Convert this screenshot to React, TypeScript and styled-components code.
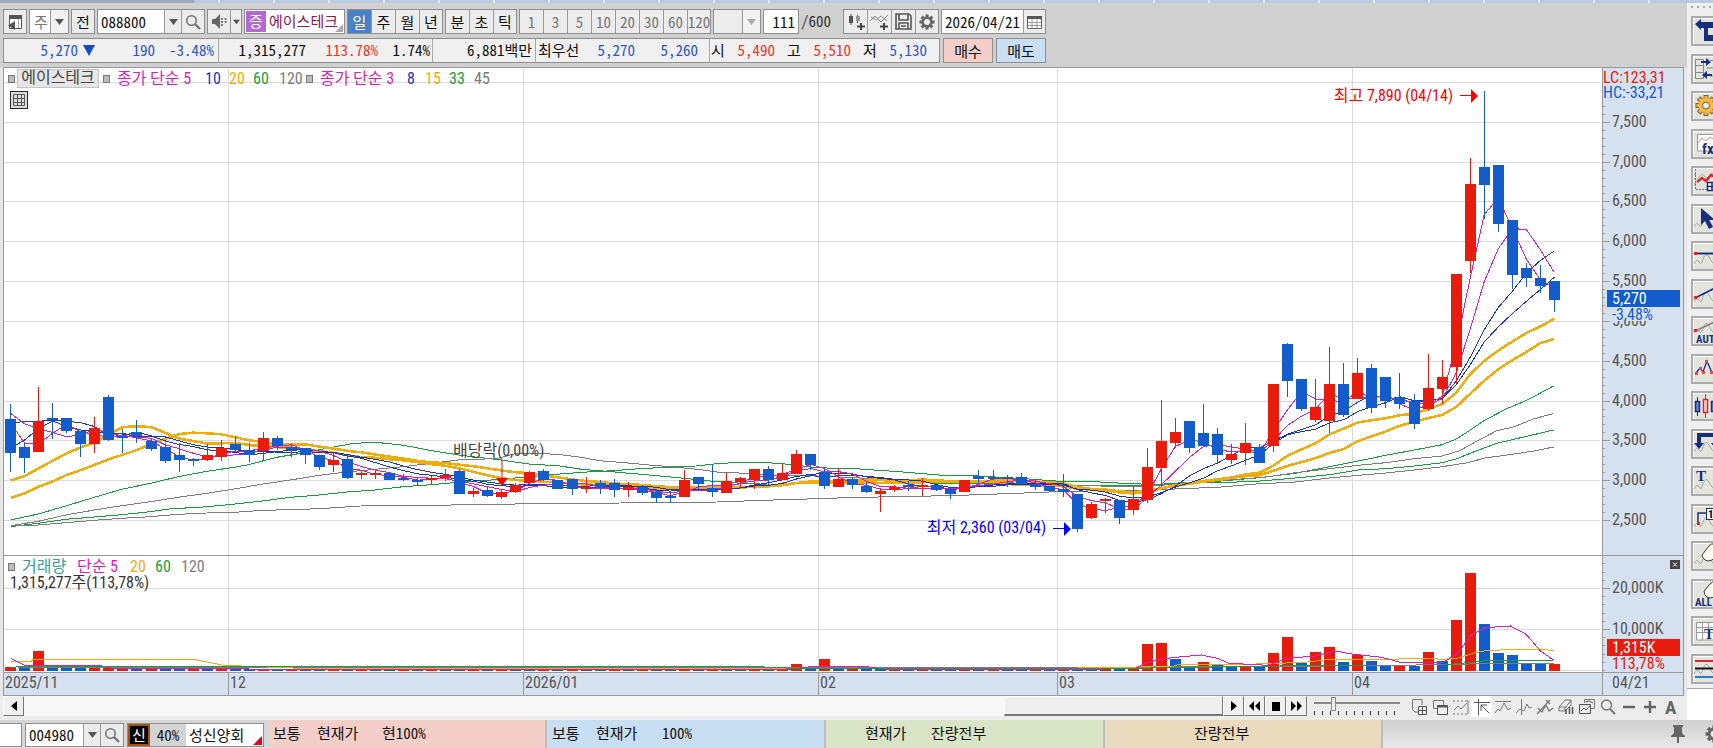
import React, { useLayoutEffect, useRef, useState } from 'react';
import styled, { createGlobalStyle, css } from 'styled-components';

const FONT = '"Noto Sans Mono CJK KR", "Noto Sans CJK KR", monospace';
const CHART_FONT = '"Roboto Condensed", "Noto Sans CJK KR", sans-serif';
const RED = '#e81b0c';
const BLUE = '#125ccb';
const MAGENTA = '#e01cb8';
const NAVY = '#1a35b5';
const ORANGE = '#f0ac08';
const GREEN = '#12a03c';
const GRAY = '#7c7c7c';

const Global = createGlobalStyle`
  * { box-sizing: border-box; }
  body { margin: 0; background: #e6e6e6; font: 15px/20px ${FONT}; color: #111; overflow-x: hidden; }
  button, input, select { font: inherit; color: inherit; margin: 0; padding: 0; border: 0; border-radius: 0; background: none; }
`;

/* ---------- page ---------- */
const Page = styled.div`display: flex; flex-direction: column; min-height: 100vh;`;
const TopStrip = styled.div`
  height: 3px;
  background: linear-gradient(90deg, #a0aaba 0 194px, transparent 194px), repeating-linear-gradient(90deg, #bdc9de 0 53px, #dfe6f0 53px 55px);
`;
const SideStrip = styled.div`height: 3px; background: #bdc9de;`;
const Main = styled.main`display: flex; flex: 1;`;
const Work = styled.div`flex: 1; min-width: 0; display: flex; flex-direction: column;`;
const Toolbar = styled.header`
  display: flex; flex-direction: column; gap: 4px; padding: 6px 3px 4px; background: #d0d0d0;
`;
const Bar = styled.div<{ $gap?: number }>`display: flex; gap: ${p => p.$gap ?? 2}px; height: 25px; white-space: nowrap;`;

/* ---------- toolbar parts ---------- */
const Group = styled.div<{ $w?: number; $bg?: string }>`
  display: flex; position: relative; flex: none;
  width: ${p => (p.$w ? `${p.$w}px` : 'auto')};
  border: 1px solid #8f8f8f; background: ${p => p.$bg ?? '#fff'};
`;
const ToolButton = styled.button<{ $w?: number; $active?: boolean; $dim?: boolean; $first?: boolean }>`
  display: flex; align-items: center; justify-content: center; flex: none;
  width: ${p => p.$w ?? 24}px;
  border-left: ${p => (p.$first ? 0 : 1)}px solid #9a9a9a;
  background: ${p => (p.$active ? '#4b80c4' : '#ececec')};
  color: ${p => (p.$active ? '#fff' : p.$dim ? '#777' : '#111')};
`;
const TextInput = styled.input<{ $w: number; $align?: string }>`
  width: ${p => p.$w}px; padding: 0 3px; text-align: ${p => p.$align ?? 'left'}; outline: 0;
`;
const Select = styled.select<{ $dim?: boolean; $bg?: string }>`
  appearance: none; width: 100%; padding-left: 4px; color: ${p => (p.$dim ? '#777' : '#111')};
  background: ${p => p.$bg ?? '#fff'};
`;
const SelectArrow = styled.span<{ $w: number }>`
  position: absolute; right: 0; top: 0; bottom: 0; width: ${p => p.$w}px; display: flex; align-items: center;
  justify-content: center; border-left: 1px solid #9a9a9a; background: #f2f2f2; pointer-events: none;
`;
const Market = styled.span`
  margin: 1px 3px 1px 1px; width: 20px; text-align: center; background: #b468d4; color: #fff;
`;
const StockName = styled.span`color: #8e1850; line-height: 22px;`;
const Corner = styled.i<{ $c: string; $s: number }>`
  position: absolute; right: 1px; bottom: 1px; border-style: solid;
  border-width: 0 0 ${p => p.$s}px ${p => p.$s}px; border-color: transparent transparent ${p => p.$c};
`;
const Total = styled.span`width: 40px; line-height: 24px; color: #333;`;

/* ---------- quote row ---------- */
const Quote = styled.div`
  display: flex; width: 937px; border: 1px solid #8f8f8f; background: #f0f0f0; line-height: 22px;
`;
const QuoteCell = styled.div<{ $w: number; $pad?: number; $end?: boolean }>`
  display: flex; flex: none; width: ${p => p.$w}px; padding-left: ${p => p.$pad ?? 0}px;
  ${p => p.$end && css`justify-content: flex-end; padding-right: 3px;`}
  & + & { border-left: 1px solid #a8a8a8; }
`;
const Num = styled.span<{ $w: number; $c?: string }>`
  width: ${p => p.$w}px; text-align: right; color: ${p => p.$c ?? '#111'};
`;
const Label = styled.span<{ $w: number; $ml?: number }>`width: ${p => p.$w}px; margin-left: ${p => p.$ml ?? 0}px;`;
const Down = styled.i`
  margin: 6px 0 0 5px; height: 0; border: solid transparent; border-width: 11px 6px 0; border-top-color: #124cc8;
`;
const OrderButton = styled.button<{ $bg: string }>`
  width: 50px; border: 1px solid #8f8f8f; background: ${p => p.$bg};
`;

/* ---------- chart ---------- */
const Frame = styled.section`
  position: relative; display: flex; margin: 0 3px; border: 1px solid #999; background: #fff;
  font: 16px/19px ${CHART_FONT};
`;
const Plot = styled.div`flex: 1; min-width: 0; overflow: hidden; svg { display: block; }`;
const Axis = styled.svg`display: block; flex: none; width: 81px; background: #d6e1ef;`;
const Legend = styled.div<{ $top: number }>`
  position: absolute; left: 4px; top: ${p => p.$top}px; display: flex; align-items: center; height: 19px;
`;
const Square = styled.i<{ $ml?: number }>`
  width: 7px; height: 8px; margin-left: ${p => p.$ml ?? 0}px; border: 1px solid #777; background: #bbb;
`;
const LegendName = styled.span`
  margin: 0 4px 0 2px; width: 82px; height: 19px; line-height: 16px; border: 1px solid #c4c4c4; background: #e6e6e6;
  color: #444; text-align: center;
`;
const Key = styled.span<{ $w: number; $c: string; $ml?: number }>`
  width: ${p => p.$w}px; margin-left: ${p => p.$ml ?? 0}px; color: ${p => p.$c}; white-space: nowrap;
`;
const GridButton = styled.button`
  position: absolute; left: 6px; top: 23px; width: 18px; height: 18px; border: 1px solid #222; background: #ddd;
  display: grid; place-items: center;
`;
const VolumeText = styled.span`position: absolute; left: 6px; top: 505px; color: #333;`;

/* ---------- scroll row ---------- */
const ScrollRow = styled.div`
  display: flex; align-items: flex-start; height: 24px; padding: 0 6px 0 3px; background: #ececec;
`;
const ScrollButton = styled.button`
  display: grid; place-items: center; flex: none; width: 21px; height: 20px;
  border: 1px solid; border-color: #fff #777 #777 #fff; background: #efefef;
`;
const Track = styled.div`flex: 1; display: flex; justify-content: flex-end; height: 20px; background: #f8f8f8;`;
const Thumb = styled.div`
  width: 18.3%; border: solid; border-width: 1px 1px 2px; border-color: #fff #777 #777 #fff; background: #efefef;
`;
const SliderBox = styled.label`display: grid; width: 86px; margin: 0 8px 0 7px;`;
const Range = styled.input`
  appearance: none; width: 86px; height: 15px; margin: 0; background: linear-gradient(#888, #888) 0 6px / 100% 2px no-repeat;
  &::-webkit-slider-thumb { appearance: none; width: 5px; height: 14px; background: #eee; border: 1px solid #888; }
`;
const Ticks = styled.i`height: 4px; background: repeating-linear-gradient(90deg, #333 0 1px, transparent 1px 8px);`;
const IconButton = styled.button<{ $on?: boolean }>`
  display: grid; place-items: center; flex: none; width: 21px; height: 21px; background: ${p => (p.$on ? '#fff' : 'none')};
`;

/* ---------- side tools ---------- */
const Side = styled.aside`
  display: flex; flex-direction: column; width: 26px; overflow: hidden; background: #efefef;
`;
const Grip = styled.i`height: 2px; margin: 3px 0 8px 4px; background: repeating-linear-gradient(90deg, #aaa 0 2px, transparent 2px 6px);`;
const SideList = styled.div`
  display: flex; flex-direction: column; justify-content: space-between; flex: 1; max-height: 668px; padding-left: 4px;
`;
const SideButton = styled.button`
  width: 34px; height: 30px; border: 2px solid #ababab; background: #e4e4df; box-shadow: inset 1px 1px #fff;
  svg { display: block; }
`;
const SideFoot = styled.div`height: 32px; margin-top: 4px; border-top: 1px solid #aaa; background: #fff;`;

/* ---------- status bar ---------- */
const Status = styled.footer`
  display: flex; height: 28px; background: linear-gradient(#d0d0d0, #e8e8e8); white-space: nowrap; overflow: hidden;
`;
const StatusTools = styled.div`
  display: flex; gap: 3px; width: 269px; flex: none; padding-top: 3px; height: 27px; background: #d6d6d6;
`;
const Stub = styled.span`width: 22px; border: 1px solid #8f8f8f; border-left: 0; background: #fff;`;
const Credit = styled.span`width: 22px; border: 2px solid #a0541a; background: #000; color: #fff; text-align: center; line-height: 17px;`;
const Rate = styled.span`width: 36px; background: #d4d4d4; text-align: center; line-height: 21px;`;
const Company = styled.span`padding-left: 3px; line-height: 21px;`;
const Panel = styled.div<{ $bg: string; $pad: number; $w: number }>`
  display: flex; flex: 0 1 ${p => p.$w}px; padding-left: ${p => p.$pad}px; line-height: 26px;
  border-right: 2px solid #bdbdbd; background: ${p => p.$bg};
`;
const StatusEnd = styled.div`display: flex; align-items: center; gap: 20px; margin-left: auto; margin-right: -10px;`;

const Tri = ({ c = '#555', s = 9 }: { c?: string; s?: number }) => (
  <svg width={s} height={6} viewBox="0 0 9 6" aria-hidden><path d="M0 0h9L4.500 6z" fill={c} /></svg>
);
const Lens = () => (
  <svg width="16" height="16" viewBox="0 0 16 16" fill="none" stroke="#777"><circle cx="6.500" cy="6.500" r="4.700" strokeWidth="1.600" /><path d="M10 10l5 5" strokeWidth="2.400" /></svg>
);
const Gear = ({ s = 17, c = '#666' }: { s?: number; c?: string }) => (
  <svg width={s} height={s} viewBox="0 0 18 18" aria-hidden>
    <g fill={c}>{[0, 45, 90, 135].map(a => <rect key={a} x="7.300" y="0.500" width="3.400" height="17" transform={`rotate(${a} 9 9)`} />)}<circle cx="9" cy="9" r="6.300" /></g>
    <circle cx="9" cy="9" r="3.400" fill="#eee" />
  </svg>
);

/* Price bars: direction, body top, body bottom, wick top, wick bottom (chart y). */
type Candle = [0 | 1, number, number, number, number];
const thirds = (base: number, rows: Candle[]): Candle[] =>
  rows.map(r => [r[0], base + r[1] / 3, base + r[2] / 3, base + r[3] / 3, base + r[4] / 3]);
const CANDLES: Candle[] = [
  ...thirds(360, [
    [0, 178, 278, 132, 335], [0, 262, 293, 250, 340], [1, 184, 276, 80, 276], [0, 175, 181, 128, 238], [0, 175, 214, 175, 218],
    [0, 212, 252, 212, 291], [1, 205, 252, 170, 279], [0, 111, 240, 106, 244], [0, 227, 233, 207, 279], [0, 217, 229, 181, 248],
    [0, 243, 266, 238, 272], [0, 262, 303, 250, 308], [0, 284, 300, 250, 335], [0, 297, 300, 294, 317], [1, 285, 300, 252, 302],
    [1, 264, 290, 240, 302], [0, 252, 271, 227, 275], [0, 269, 284, 250, 305], [1, 234, 272, 215, 303], [0, 235, 258, 227, 270],
    [0, 262, 270, 255, 292], [0, 264, 284, 264, 312], [0, 284, 322, 284, 330], [1, 299, 315, 279, 335], [0, 298, 353, 288, 357],
    [1, 340, 345, 334, 357], [1, 339, 343, 332, 357], [0, 340, 360, 340, 360], [0, 353, 357, 343, 362], [0, 360, 364, 354, 378],
    [1, 354, 359, 348, 375], [1, 345, 353, 327, 362], [0, 332, 402, 326, 402], [1, 393, 402, 384, 410], [0, 389, 408, 381, 410],
    [1, 396, 410, 386, 417], [1, 376, 395, 370, 400], [1, 336, 368, 332, 376], [0, 333, 360, 328, 364], [0, 360, 387, 360, 387],
  ]),
  ...thirds(400, [
    [0, 238, 267, 238, 284], [1, 262, 267, 230, 278], [0, 248, 263, 240, 282], [0, 249, 271, 237, 290], [1, 261, 271, 245, 290],
    [0, 261, 278, 255, 284], [0, 275, 293, 268, 308], [0, 288, 292, 278, 308], [1, 241, 290, 210, 290], [0, 231, 251, 231, 268],
    [0, 265, 277, 194, 290], [1, 242, 278, 218, 278], [1, 235, 245, 230, 264], [1, 208, 241, 208, 268], [0, 208, 241, 199, 256],
    [1, 220, 240, 192, 240], [1, 163, 223, 151, 223], [0, 163, 196, 163, 210], [0, 215, 258, 203, 266], [1, 238, 260, 204, 260],
    [0, 238, 255, 232, 268], [0, 258, 276, 245, 279], [1, 272, 282, 265, 335], [1, 262, 269, 254, 275], [0, 255, 260, 243, 274],
    [1, 255, 260, 235, 288], [0, 255, 270, 255, 274], [0, 266, 283, 260, 297], [1, 239, 275, 239, 275], [0, 228, 236, 211, 248],
    [0, 231, 235, 211, 241], [0, 231, 235, 226, 260], [0, 231, 251, 219, 251], [0, 251, 260, 237, 271], [0, 257, 272, 257, 276],
    [0, 268, 276, 222, 290], [0, 283, 387, 283, 395], [1, 312, 353, 306, 358], [1, 298, 304, 293, 338],
  ]),
  ...thirds(320, [
    [0, 541, 593, 541, 612], [1, 538, 571, 500, 586], [1, 440, 540, 384, 549], [1, 362, 443, 241, 502], [1, 336, 368, 293, 385],
    [0, 302, 383, 302, 398], [0, 339, 377, 252, 377], [0, 343, 406, 324, 430], [1, 403, 419, 373, 432], [1, 369, 398, 309, 436],
    [0, 381, 429, 373, 429], [1, 193, 378, 193, 395], [0, 73, 184, 68, 230], [0, 178, 267, 178, 272], [1, 261, 301, 177, 305],
    [1, 193, 304, 80, 340], [0, 193, 286, 129, 290], [1, 159, 237, 114, 237], [0, 144, 263, 132, 279], [0, 170, 244, 170, 264],
    [0, 230, 251, 159, 266], [0, 242, 312, 222, 327], [1, 205, 267, 102, 272], [1, 170, 208, 121, 252],
  ]),
  ...thirds(60, [
    [1, 643, 920, 643, 972], [1, 373, 604, 294, 640], [0, 321, 376, 92, 478], [0, 316, 492, 316, 515], [0, 481, 646, 481, 687],
    [0, 624, 654, 609, 680], [0, 654, 677, 616, 698], [0, 664, 720, 664, 755],
  ]),
];
const barX = (i: number) => 10.7 + i * 14.033;
const CLOSES = CANDLES.map(c => (c[0] ? c[1] : c[2]));

type Pt = [number, number];
const average = (n: number, lead: number[]): Pt[] =>
  CLOSES.map((_, i) => {
    if (i < n - 1) return [barX(i), 360 + lead[i] / 3];
    return [barX(i), CLOSES.slice(i - n + 1, i + 1).reduce((a, b) => a + b, 0) / n];
  });
const trace = (ox: number, sx: number, oy: number, pts: number[]): Pt[] => {
  const out: Pt[] = [];
  for (let i = 0; i < pts.length; i += 2) out.push([ox + pts[i] / sx, oy + pts[i + 1] / 3]);
  return out;
};
const W1 = [0, 2.8, 360] as const, W2 = [560, 2.8, 400] as const, W3 = [1100, 2.558, 320] as const;
const SLOW: [string, Pt[]][] = [
  [GREEN, [
    ...trace(...W1, [30, 480, 107, 462, 184, 438, 264, 412, 341, 388, 421, 370, 499, 350, 579, 334, 656, 322, 695, 314, 775, 292, 852, 278, 920, 264, 980, 252, 1045, 246, 1130, 256, 1210, 272, 1290, 286, 1404, 300, 1482, 312]),
    ...trace(...W2, [0, 198, 60, 208, 130, 214, 260, 226, 340, 234, 410, 242, 480, 248, 560, 252, 640, 252, 720, 248, 960, 248, 1300, 252]),
    ...trace(...W3, [0, 497, 100, 496, 200, 490, 300, 488, 400, 484, 500, 474, 587, 464, 660, 450, 731, 446, 804, 438, 875, 428, 913, 416, 960, 394, 1015, 370, 1070, 355, 1160, 330]),
  ]],
  [GREEN, [
    ...trace(...W1, [30, 500, 107, 490, 184, 478, 264, 471, 341, 464, 421, 455, 480, 446, 560, 442, 640, 434, 740, 422, 813, 412, 894, 405, 971, 396, 1050, 390, 1129, 380, 1209, 374, 1290, 366, 1404, 358, 1482, 350]),
    ...trace(...W2, [0, 222, 60, 217, 150, 212, 220, 206, 300, 202, 380, 198, 430, 192, 500, 187, 570, 187, 640, 193, 720, 203, 840, 207, 960, 216, 1060, 225, 1170, 228, 1300, 236, 1400, 244]),
    ...trace(...W3, [0, 486, 60, 490, 150, 494, 210, 488, 300, 484, 400, 474, 500, 460, 587, 440, 660, 423, 731, 406, 804, 390, 875, 374, 913, 356, 950, 328, 985, 300, 1040, 266, 1090, 242, 1160, 198]),
  ]],
  [GRAY, [
    ...trace(...W1, [30, 497, 107, 484, 184, 465, 264, 450, 341, 437, 421, 425, 499, 412, 579, 400, 656, 387, 736, 372, 813, 360, 894, 346, 971, 336, 1050, 328, 1129, 320, 1209, 310, 1290, 299, 1390, 296, 1440, 282, 1510, 280]),
    ...trace(...W2, [0, 164, 60, 172, 110, 182, 180, 188, 250, 195, 330, 202, 400, 210, 440, 216, 520, 220, 600, 226, 720, 228, 840, 234, 960, 242, 1100, 244, 1300, 250, 1400, 256]),
    ...trace(...W3, [0, 498, 100, 500, 200, 492, 300, 482, 420, 472, 500, 458, 587, 446, 660, 436, 731, 428, 804, 416, 875, 408, 920, 392, 960, 366, 1015, 332, 1060, 320, 1110, 296, 1160, 281]),
  ]],
  [GRAY, [
    ...trace(...W1, [30, 498, 107, 495, 184, 488, 264, 481, 341, 475, 421, 470, 499, 463, 579, 459, 656, 457, 736, 451, 813, 449, 894, 446, 1010, 438, 1209, 437, 1320, 433]),
    ...trace(...W2, [0, 311, 170, 309, 440, 306, 570, 301, 720, 296, 800, 293, 930, 290, 1090, 287, 1250, 281, 1370, 276]),
    ...trace(...W3, [0, 512, 100, 513, 170, 508, 300, 502, 400, 492, 500, 486, 587, 474, 660, 466, 731, 459, 804, 450, 875, 440, 940, 428, 985, 414, 1060, 402, 1110, 393, 1160, 381]),
  ]],
];
const WIDE: Pt[][] = [
  average(15, [362, 348, 325, 302, 280, 262, 248, 222, 201, 199, 201, 218, 236, 243]),
  average(20, [414, 400, 380, 364, 345, 330, 314, 298, 284, 270, 252, 236, 222, 218, 220, 223, 232, 241, 246]),
];
const FAST: [string, Pt[]][] = [
  [NAVY, average(8, [190, 184, 184, 180, 184, 188, 200])],
  [NAVY, average(10, [265, 240, 204, 183, 200, 210, 215, 219, 220])],
  [MAGENTA, average(5, [160, 192, 205, 218])],
  [MAGENTA, average(3, [190, 250])],
];

/* Volume bars: index -> direction and top. */
const BIG: Record<number, [0 | 1, number]> = {
  0: [1, 380], 1: [0, 383], 2: [1, 334], 3: [0, 383], 4: [0, 383], 5: [0, 383], 6: [1, 383], 7: [1, 383], 56: [1, 372], 58: [1, 358],
  81: [1, 312], 82: [1, 309], 83: [0, 358], 84: [0, 377], 85: [1, 366], 86: [0, 376], 87: [0, 381], 88: [1, 380], 89: [0, 380],
  90: [1, 340], 91: [1, 290], 92: [0, 366], 93: [1, 335], 94: [1, 320], 95: [0, 365], 96: [1, 346], 97: [0, 362], 98: [0, 377],
  99: [1, 377], 100: [0, 377], 101: [1, 336], 102: [0, 362], 103: [1, 241], 104: [1, 99], 105: [0, 253], 106: [0, 338],
  107: [0, 346], 108: [0, 371], 109: [0, 371], 110: [1, 372],
};
const V1 = [0, 2.8, 540] as const, V3 = [1100, 2.558, 540] as const;
const VOLUME_LINES: [string, Pt[]][] = [
  [GRAY, [...trace(...V1, [50, 383, 1568, 382]), ...trace(...V3, [130, 381, 460, 379, 690, 377, 930, 373, 980, 370, 1160, 370])]],
  [ORANGE, [...trace(...V1, [30, 363, 88, 363, 92, 359, 548, 359, 625, 376, 870, 386, 1568, 386, 2200, 386, 2900, 385]), ...trace(...V3, [60, 383, 140, 378, 190, 378, 200, 374, 340, 374, 460, 370, 530, 366, 580, 359, 850, 356, 880, 358, 915, 354, 960, 338, 985, 332, 1040, 329, 1130, 328, 1160, 332])]],
  [MAGENTA, [...trace(...V1, [30, 355, 68, 375, 272, 375, 320, 386, 1568, 389, 2200, 389, 2280, 379, 2420, 379, 2480, 388, 3050, 388]), ...trace(...V3, [90, 385, 120, 368, 158, 357, 193, 352, 260, 345, 300, 355, 330, 370, 430, 376, 480, 355, 550, 348, 600, 333, 650, 343, 720, 352, 768, 367, 880, 366, 915, 340, 950, 285, 985, 263, 1050, 258, 1090, 283, 1127, 333, 1160, 360])]],
  [GREEN, [...trace(...V1, [30, 383, 50, 380, 2120, 380, 2200, 384]), ...trace(...V3, [0, 384, 130, 384, 340, 380, 460, 378, 690, 375, 880, 375, 940, 368, 980, 363, 1160, 362])]],
];

const MONTHS: [number, string][] = [[228, '12'], [523, '2026/01'], [818, '02'], [1057, '03'], [1352, '04']];
const priceY = (p: number) => Math.round(520 - (p - 2500) * 0.07964);
const PRICES = [2500, 3000, 3500, 4000, 4500, 5000, 5500, 6000, 6500, 7000, 7500];
const TOP = 68, HEIGHT = 627, PLOT_W = 1598;

function useWidth(initial: number) {
  const ref = useRef<HTMLDivElement>(null);
  const [width, setWidth] = useState(initial);
  useLayoutEffect(() => {
    const el = ref.current;
    if (!el) return;
    const update = () => setWidth(el.clientWidth);
    update();
    const ro = new ResizeObserver(update);
    ro.observe(el);
    return () => ro.disconnect();
  }, []);
  return [ref, width] as const;
}

function PlotArea() {
  const [ref, w] = useWidth(PLOT_W);
  const fx = (x: number) => ((x - 4) * w) / PLOT_W;
  const line = (pts: Pt[]) => pts.map(([x, y]) => `${fx(x).toFixed(1)},${y.toFixed(1)}`).join(' ');
  const bw = Math.max(3, Math.round((11 * w) / PLOT_W));
  return (
    <Plot ref={ref}>
      <svg width={w} height={HEIGHT} viewBox={`0 ${TOP} ${w} ${HEIGHT}`} fontFamily={CHART_FONT} fontSize="16">
        <g fill="#dadada" shapeRendering="crispEdges">
          {[...PRICES, 8000].map(p => <rect key={p} x="0" y={priceY(p)} width={w - 2} height="1" />)}
          <rect x="0" y="588" width={w - 2} height="1" /><rect x="0" y="629" width={w - 2} height="1" /><rect x="0" y="670" width={w - 2} height="1" />
          {MONTHS.map(([x]) => <rect key={x} x={Math.round(fx(x))} y={TOP} width="1" height="605" />)}
        </g>
        <g fill="none" shapeRendering="crispEdges">
          {SLOW.map(([c, p], i) => <polyline key={i} points={line(p)} stroke={c} />)}
          {WIDE.map((p, i) => <polyline key={i} points={line(p)} stroke={ORANGE} strokeWidth="2.500" />)}
          {FAST.map(([c, p], i) => <polyline key={i} points={line(p)} stroke={c} />)}
        </g>
        <g shapeRendering="crispEdges">
          {CANDLES.map(([up, t, b, wt, wb], i) => {
            const x = Math.floor(fx(barX(i)));
            return (
              <g key={i} fill={up ? RED : BLUE}>
                <rect x={x} y={wt} width="1" height={wb - wt} />
                <rect x={x - Math.floor(bw / 2)} y={Math.round(t)} width={bw} height={Math.max(2, Math.round(b) - Math.round(t))} />
              </g>
            );
          })}
          {CANDLES.map((_, i) => {
            const [up, t] = BIG[i] ?? [((i * 7) % 5 < 2 ? 1 : 0) as 0 | 1, 386];
            const y = Math.round(540 + t / 3);
            return <rect key={i} x={Math.floor(fx(barX(i))) - Math.floor(bw / 2)} y={y} width={bw} height={671 - y} fill={up ? RED : BLUE} />;
          })}
          {VOLUME_LINES.map(([c, p], i) => <polyline key={i} points={line(p)} stroke={c} fill="none" />)}
        </g>
        <path d={`M${fx(502)} 459v20`} stroke={RED} />
        <path d={`M${fx(502) - 6} 478h12l-6 8z`} fill="#f00" />
        <text x={fx(453)} y="456" fill="#444">배당락(0,00%)</text>
        <g fill="#f00"><text x={fx(1457) - 4} y="101" textAnchor="end">최고 7,890 (04/14)</text><path d={`M${fx(1460)} 95h11v-6l7 7-7 7v-7h-11z`} /></g>
        <g fill="#00f"><text x={fx(1050) - 4} y="533" textAnchor="end">최저 2,360 (03/04)</text><path d={`M${fx(1053)} 528h11v-6l7 7-7 7v-7h-11z`} /></g>
        <rect x="0" y="555" width={w} height="1" fill="#999" />
        <rect x="0" y="672" width={w} height="24" fill="#d6e1ef" />
        <rect x="0" y="672" width={w} height="1" fill="#999" />
        <g fill="#555">
          <text x="1" y="688">2025/11</text>
          {MONTHS.map(([x, t]) => <g key={x}><rect x={Math.round(fx(x))} y="673" width="1" height="23" fill="#999" /><text x={fx(x) + 2} y="688">{t}</text></g>)}
        </g>
      </svg>
    </Plot>
  );
}

function PriceAxis() {
  const minor: number[] = [];
  for (let p = 2500; p <= 7700; p += 100) minor.push(520 - (p - 2500) * 0.07964);
  for (let y = 670; y > 556; y -= 8.2) minor.push(y);
  return (
    <Axis height={HEIGHT} viewBox={`0 ${TOP} 81 ${HEIGHT}`} fontFamily={CHART_FONT} fontSize="16">
      <rect x="0" y={TOP} width="1" height={HEIGHT} fill="#999" />
      <g fill="#999" shapeRendering="crispEdges">
        {minor.map((y, i) => <rect key={i} x="1" y={Math.round(y)} width="2" height="1" />)}
        {PRICES.map(p => <rect key={p} x="1" y={priceY(p)} width="7" height="1" />)}
        <rect x="1" y="588" width="7" height="1" /><rect x="1" y="629" width="7" height="1" />
        <rect x="0" y="555" width="81" height="1" /><rect x="0" y="672" width="81" height="1" />
      </g>
      <g fill="#555">
        {PRICES.map(p => <text key={p} x="10" y={priceY(p) + 5}>{p.toLocaleString('en-US')}</text>)}
        <text x="10" y="593">20,000K</text><text x="10" y="634">10,000K</text><text x="10" y="688">04/21</text>
      </g>
      <text x="1" y="83" fill={RED}>LC:123,31</text>
      <text x="1" y="98" fill={BLUE}>HC:-33,21</text>
      <rect x="9" y="307" width="60" height="14" fill="#d6e1ef" />
      <rect x="5" y="290" width="73" height="17" fill={BLUE} /><text x="10" y="304" fill="#fff">5,270</text>
      <text x="10" y="320" fill={BLUE}>-3,48%</text>
      <rect x="5" y="639" width="73" height="17" fill={RED} /><text x="10" y="653" fill="#fff">1,315K</text>
      <text x="10" y="669" fill={RED}>113,78%</text>
      <rect x="68" y="560" width="10" height="9" fill="#444" /><path d="M71 562.500l4 4m0-4l-4 4" stroke="#fff" />
    </Axis>
  );
}

/* ---------- side tool drawings (26 x 26) ---------- */
const Wave = ({ y = 0 }: { y?: number }) => <path d={`M1 ${21 + y}q3-6 5-2t4-3q3-8 6-2t5 7`} fill="none" stroke="#a5a5a5" />;
const INK = '#1a2f7c';
const SIDE: React.ReactNode[] = [
  <path d="M2 6l6-5v3h13v6h-6v7h7v6h-11V10H8v2z" fill={INK} />,
  <><g fill="none" stroke="#888"><path d="M2.500 3.500h8v19h-8zM2.500 9.500h8M2.500 16.500h8M14 12h8M17 4.500h4M17 20h4" /></g><path d="M8 5h5V2l5 4-5 4V7H8zM19 18h-5v-3l-5 4 5 4v-3h5z" fill={INK} /></>,
  <g transform="translate(3 2)"><g fill="#f4b63c" stroke="#7a6232">{[0, 45, 90, 135].map(a => <rect key={a} x="8" y="0.500" width="4" height="20" transform={`rotate(${a} 10 10.500)`} />)}</g><circle cx="10" cy="10.500" r="7.500" fill="#f7b93e" /><circle cx="10" cy="10.500" r="3.500" fill="#eee" stroke="#7a6232" /></g>,
  <><path d="M4.500 17V3.500H26V20H4.500z" fill="#fff" stroke="#999" /><path d="M5 12l4-5 4 3 4-4 6 4" fill="none" stroke="#e88" /><text x="9" y="23" fontSize="15" fontFamily={CHART_FONT} fontWeight="700" fill={INK}>fx</text></>,
  <><path d="M2.500 1v20.500H15M1 6h2M1 11h2M1 16h2" stroke="#777" fill="none" strokeDasharray="2 1" /><path d="M4 11l5-5 5 4 5-5 4 2" stroke="#aaa" fill="none" /><path d="M4 14l5-4 4 3 5-6 6 3" fill="none" stroke="#d8262a" strokeWidth="2.500" /><path d="M14.500 14.500h10v8h-10zM14.500 18.500h10M19 14.500v8" fill="#fff" stroke={INK} strokeWidth="1.500" /></>,
  <><Wave /><path d="M8 2v17l4-4 4 8 4-2-4-7h6z" fill={INK} /></>,
  <><Wave /><path d="M2 10.500h24" stroke={INK} strokeWidth="2" /><rect x="1" y="9" width="3" height="3" fill="#e22" /></>,
  <><Wave /><path d="M2 17L26 5" stroke={INK} strokeWidth="1.600" /><rect x="1" y="15" width="3" height="3" fill="#e22" /></>,
  <><Wave y={-6} /><path d="M2 13L26 2" stroke="#888" strokeWidth="1.600" /><rect x="1" y="11" width="3" height="3" fill="#e22" /><text x="3" y="25" fontSize="11" fontWeight="700" fontFamily={CHART_FONT} fill={INK}>AUTO</text></>,
  <><path d="M3 17l4-5 3 4 4-11 5 12 4-5" fill="none" stroke={INK} strokeWidth="1.300" />{[[3, 17], [7, 12], [10, 16], [13, 5], [18, 16]].map(([x, y]) => <rect key={x} x={x - 1} y={y - 1} width="3" height="3" fill="#e44" />)}</>,
  <><path d="M4.500 4v19M20.500 4v19" stroke={INK} /><path d="M2.500 8.500h4v10h-4zM18.500 8.500h4v10h-4z" fill="#6a84cc" stroke={INK} strokeWidth="1.500" /><path d="M12.500 1v24" stroke="#d22" /><path d="M10.500 6.500h4v13h-4z" fill="#fdd" stroke="#d22" strokeWidth="1.500" /></>,
  <><Wave /><path d="M6 15V4h17v10" fill="none" stroke={INK} strokeWidth="4" /><path d="M1 12h10l-5 6zM18 12h10l-5 6z" fill={INK} /></>,
  <><Wave /><text x="3" y="13" fontSize="15" fontWeight="700" fontFamily="Liberation Serif, serif" fill={INK}>T</text></>,
  <><Wave /><path d="M5 17V7h8" fill="none" stroke={INK} strokeWidth="1.500" /><rect x="4" y="16" width="3" height="3" fill="#e22" /><rect x="13.500" y="2.500" width="14" height="11" fill="#fff" stroke={INK} /><text x="15" y="12" fontSize="11" fontWeight="700" fontFamily={CHART_FONT}>1</text></>,
  <><Wave /><path d="M9 12L16 3q2-3 6-2l5 3v6l-8 7q-4 2-7 0t-3-5z" fill="#fffdf0" stroke="#333" /></>,
  <><path d="M11 10L17 3q2-3 6-2l4 3v6l-6 6q-4 2-7 0t-3-6z" fill="#fffdf0" stroke="#333" /><text x="2" y="25" fontSize="11" fontWeight="700" fontFamily={CHART_FONT} fill={INK}>ALL</text></>,
  <><path d="M3.500 4.500H27V22H3.500zM3.500 9.500H27M3.500 14.500H27M9.500 4.500V22M15.500 4.500V22" fill="#fff" stroke="#999" /><text x="11" y="21" fontSize="15" fontWeight="700" fontFamily="Liberation Serif, serif" fill={INK}>T</text></>,
  <><Wave y={-3} /><path d="M2 5h24" stroke="#d8262a" strokeWidth="2" /><path d="M2 12.500h24" stroke="#111" strokeWidth="2" /><path d="M2 21h24" stroke="#2d78c8" strokeWidth="2" /></>,
];
const SIDE_NAMES = ['되돌리기', '화면전환', '설정', '수식', '지표추가', '선택', '수평선', '추세선', '자동추세', '지그재그', '봉', '주기', '문자', '번호', '지우기', '모두지우기', '표', '평행선'];

const g = '#777';
const FOOT_ICONS: [string, React.ReactNode][] = [
  ['창 추가', <><path d="M12 7V1.500H2.500v10L5 14h3" fill="none" stroke={g} /><path d="M8.500 8.500h8v8h-8zM12.500 8.500v8M8.500 12.500h8" fill="none" stroke="#555" /></>],
  ['창 복사', <><path d="M2.500 2.500h10v8h-10z" fill="none" stroke={g} /><path d="M6.500 7.500h10v9h-10z" fill="#eee" stroke="#555" /><path d="M6.500 8.500h10" stroke="#555" strokeWidth="2" /></>],
  ['확대', <><path d="M1 3h16M1 16h16" stroke={g} strokeDasharray="2 2" /><path d="M2 12l4-4 3 3 6-6M16 2v14" fill="none" stroke={g} /></>],
  ['십자선', <><path d="M1 4.500h16M5.500 1v16" stroke="#555" /><path d="M8 7l8 8M8 7h6M8 7v6" stroke="#555" fill="none" /></>],
  ['수평', <path d="M1 3.500h16M1 15l3-4 2 2 4-8 4 7 3-2" stroke={g} fill="none" />],
  ['수직', <path d="M6.500 1v16M1 15l4-4 4 2 3-7 2 4 3-1" stroke={g} fill="none" />],
  ['추세', <path d="M1 16L14 2M2 10l4 4 4-7 3 6 4-3M10 2l4 4" stroke={g} fill="none" strokeWidth="1.200" />],
  ['모두 삭제', <><path d="M2 9l6-7h6l-5 7zM2 9v4h6V9M8 13l6-6V2" fill="none" stroke={g} /><path d="M9 11v5M12.500 9v7M15.500 9v7" stroke="#555" strokeWidth="1.500" /></>],
  ['그림 저장', <><path d="M6.500 5V1.500h10v9h-4" fill="none" stroke={g} /><path d="M1.500 6.500h11v9h-11z" fill="#eee" stroke="#555" /><path d="M3 13l3-3 2 2 4-4M8 4l3-1 4 2" stroke="#555" fill="none" /></>],
  ['찾기', <><circle cx="7.500" cy="7" r="5" fill="none" stroke={g} strokeWidth="1.400" /><path d="M11 11l5 5" stroke={g} strokeWidth="2" /></>],
  ['축소', <path d="M3 9h12" stroke="#666" strokeWidth="2.500" />],
  ['늘림', <path d="M3 9h12M9 3v12" stroke="#666" strokeWidth="2.500" />],
  ['자동', <text x="3" y="16" fontSize="19" fontWeight="700" fontFamily={CHART_FONT} fill="#666">A</text>],
];

const Periods = ({ items, active, dim }: { items: string[]; active?: string; dim?: boolean }) => (
  <Group $bg="#ececec">
    {items.map((t, i) => (
      <ToolButton key={t} $w={i === 0 || i === items.length - 1 ? 23 : 24} $first={i === 0} $active={t === active} $dim={dim}>{t}</ToolButton>
    ))}
  </Group>
);

export default function App() {
  return (
    <>
      <Global />
      <Page>
        <Main>
          <Work>
            <TopStrip />
            <Toolbar>
              <Bar>
                <Group $w={24}>
                  <ToolButton $w={22} $first aria-label="창">
                    <svg width="15" height="16" viewBox="0 0 15 16"><path d="M1.500 1.500h12v13h-12z" fill="#fff" stroke="#555" /><path d="M1 1h13v4H1zM7 7v9L0 11.500z" fill="#555" /><path d="M10.500 5v9" stroke="#aaa" /></svg>
                  </ToolButton>
                </Group>
                <Group $w={40}>
                  <Select $dim aria-label="구분" defaultValue="주"><option>주</option></Select>
                  <SelectArrow $w={18}><Tri /></SelectArrow>
                </Group>
                <Group $w={24}><ToolButton $w={22} $first>전</ToolButton></Group>
                <Group $w={108}>
                  <TextInput $w={66} aria-label="종목코드" defaultValue="088800" />
                  <ToolButton $w={17} aria-label="목록"><Tri /></ToolButton>
                  <ToolButton $w={23} aria-label="검색"><Lens /></ToolButton>
                </Group>
                <Group $w={35}>
                  <ToolButton $w={22} $first aria-label="소리">
                    <svg width="15" height="15" viewBox="0 0 15 15"><path d="M0 5h3l5-5v15l-5-5H0z" fill="#666" /><path d="M10 4v8M13.500 4v5" stroke="#666" strokeWidth="1.600" strokeDasharray="2 1" /></svg>
                  </ToolButton>
                  <ToolButton $w={11} aria-label="소리 목록"><Tri s={7} /></ToolButton>
                </Group>
                <Group $w={101}><Market>증</Market><StockName>에이스테크</StockName><Corner $c="#aaa" $s={8} /></Group>
                <Periods items={['일', '주', '월', '년']} active="일" />
                <Periods items={['분', '초', '틱']} />
                <Periods items={['1', '3', '5', '10', '20', '30', '60', '120']} dim />
                <Group $w={48}>
                  <Select $dim $bg="#ececec" aria-label="분 주기" /><SelectArrow $w={18}><Tri c="#aaa" /></SelectArrow>
                </Group>
                <Group $w={36}><TextInput $w={34} $align="right" aria-label="봉 개수" defaultValue="111" /></Group>
                <Total>/600</Total>
                <Group $w={96}>
                  <ToolButton $w={23} $first aria-label="봉 설정">
                    <svg width="18" height="18" viewBox="0 0 18 18"><path d="M4 1v11M10.500 2v8" stroke="#555" /><path d="M2 3h4v7H2z" fill="#555" /><path d="M9 3h4v5H9z" fill="#999" /><path d="M10 13.500h8M14 10v7" stroke="#444" strokeWidth="2" /></svg>
                  </ToolButton>
                  <ToolButton aria-label="지표 설정">
                    <svg width="19" height="18" viewBox="0 0 19 18" fill="none"><path d="M0 8l5-5 6 6 7-7M1 4l5 3 5-4 6 5" stroke="#888" /><path d="M10 13.500h8M14 10v7" stroke="#444" strokeWidth="2" /></svg>
                  </ToolButton>
                  <ToolButton aria-label="저장">
                    <svg width="17" height="17" viewBox="0 0 17 17" fill="none" stroke="#555" strokeWidth="1.600"><path d="M1 1h13l2 2v13H1zM4 1v6h9V1M4 16v-6h9v6M6 13h5" /></svg>
                  </ToolButton>
                  <ToolButton $w={23} aria-label="설정"><Gear s={16} /></ToolButton>
                </Group>
                <Group $w={105}>
                  <TextInput $w={81} aria-label="날짜" defaultValue="2026/04/21" />
                  <ToolButton $w={22} aria-label="달력">
                    <svg width="15" height="14" viewBox="0 0 15 14"><path d="M.5 1.500h14v12H.5z" fill="#fff" stroke="#666" /><path d="M0 1h15v3H0z" fill="#555" /><path d="M1 7.500h13M1 10.500h13M5 4v9M10 4v9" stroke="#999" /></svg>
                  </ToolButton>
                </Group>
              </Bar>
              <Bar $gap={3}>
                <Quote>
                  <QuoteCell $w={214}>
                    <Num $w={74} $c="#2a56c8">5,270</Num><Down /><Num $w={60} $c="#2a56c8">190</Num><Num $w={59} $c="#2a56c8">-3.48%</Num>
                  </QuoteCell>
                  <QuoteCell $w={214}><Num $w={87}>1,315,277</Num><Num $w={72} $c="#ee3424">113.78%</Num><Num $w={52}>1.74%</Num></QuoteCell>
                  <QuoteCell $w={103} $end>6,881백만</QuoteCell>
                  <QuoteCell $w={174} $pad={2}><Label $w={46}>최우선</Label><Num $w={51} $c="#2a56c8">5,270</Num><Num $w={63} $c="#2a56c8">5,260</Num></QuoteCell>
                  <QuoteCell $w={230} $pad={1}>
                    <Label $w={14}>시</Label><Num $w={50} $c="#ee3424">5,490</Num>
                    <Label $w={14} $ml={12}>고</Label><Num $w={50} $c="#ee3424">5,510</Num>
                    <Label $w={14} $ml={12}>저</Label><Num $w={50} $c="#2a56c8">5,130</Num>
                  </QuoteCell>
                </Quote>
                <OrderButton $bg="#f4cfca">매수</OrderButton>
                <OrderButton $bg="#c8def3">매도</OrderButton>
              </Bar>
            </Toolbar>

            <Frame>
              <PlotArea />
              <PriceAxis />
              <Legend $top={1}>
                <Square /><LegendName>에이스테크</LegendName><Square />
                <Key $w={80} $ml={7} $c={MAGENTA}>종가 단순 5</Key><Key $w={16} $ml={8} $c={NAVY}>10</Key><Key $w={16} $ml={8} $c={ORANGE}>20</Key>
                <Key $w={18} $ml={8} $c={GREEN}>60</Key><Key $w={25} $ml={8} $c={GRAY}>120</Key><Square $ml={2} />
                <Key $w={80} $ml={7} $c={MAGENTA}>종가 단순 3</Key><Key $w={10} $ml={7} $c={NAVY}>8</Key><Key $w={16} $ml={8} $c={ORANGE}>15</Key>
                <Key $w={16} $ml={8} $c={GREEN}>33</Key><Key $w={16} $ml={9} $c={GRAY}>45</Key>
              </Legend>
              <GridButton aria-label="격자">
                <svg width="14" height="14" viewBox="0 0 14 14" fill="none" stroke="#555"><path d="M1.500 1.500h11v11h-11zM1.500 5.500h11M1.500 9.500h11M5.500 1v12M9.500 1v12" /></svg>
              </GridButton>
              <Legend $top={489}>
                <Square /><Key $w={47} $ml={7} $c="#3a9d9d">거래량</Key><Key $w={45} $ml={8} $c={MAGENTA}>단순 5</Key>
                <Key $w={17} $ml={8} $c={ORANGE}>20</Key><Key $w={17} $ml={8} $c={GREEN}>60</Key><Key $w={24} $ml={9} $c={GRAY}>120</Key>
              </Legend>
              <VolumeText>1,315,277주(113,78%)</VolumeText>
            </Frame>

            <ScrollRow>
              <ScrollButton aria-label="왼쪽"><svg width="6" height="10"><path d="M6 0v10L0 5z" /></svg></ScrollButton>
              <Track><Thumb /></Track>
              <ScrollButton aria-label="오른쪽"><svg width="6" height="10"><path d="M0 0v10l6-5z" /></svg></ScrollButton>
              <ScrollButton aria-label="뒤로"><svg width="11" height="10"><path d="M5 0v10L0 5zM11 0v10L6 5z" /></svg></ScrollButton>
              <ScrollButton aria-label="정지"><svg width="8" height="9"><path d="M0 0h8v9H0z" /></svg></ScrollButton>
              <ScrollButton aria-label="앞으로"><svg width="11" height="10"><path d="M0 0v10l5-5zM6 0v10l5-5z" /></svg></ScrollButton>
              <SliderBox><Range type="range" aria-label="속도" defaultValue={21} /><Ticks /></SliderBox>
              {FOOT_ICONS.map(([n, d], i) => (
                <IconButton key={n} aria-label={n} $on={i === 3}><svg width="18" height="18" viewBox="0 0 18 18">{d}</svg></IconButton>
              ))}
            </ScrollRow>
          </Work>

          <Side>
            <SideStrip />
            <Grip />
            <SideList>
              {SIDE.map((d, i) => <SideButton key={i} aria-label={SIDE_NAMES[i]}><svg width="30" height="26" viewBox="0 0 30 26">{d}</svg></SideButton>)}
            </SideList>
            <SideFoot />
          </Side>
        </Main>

        <Status>
          <StatusTools>
            <Stub />
            <Group $w={99}>
              <TextInput $w={57} aria-label="종목코드 2" defaultValue="004980" />
              <ToolButton $w={17} aria-label="목록"><Tri /></ToolButton>
              <ToolButton $w={23} aria-label="검색"><Lens /></ToolButton>
            </Group>
            <Group $w={137}><Credit>신</Credit><Rate>40%</Rate><Company>성신양회</Company><Corner $c="#e00020" $s={9} /></Group>
          </StatusTools>
          <Panel $bg="#f4cfca" $w={278} $pad={4}><Label $w={44}>보통</Label><Label $w={65}>현재가</Label>현100%</Panel>
          <Panel $bg="#c8def3" $w={279} $pad={5}><Label $w={44}>보통</Label><Label $w={66}>현재가</Label>100%</Panel>
          <Panel $bg="#dae4c6" $w={279} $pad={39}><Label $w={66}>현재가</Label>잔량전부</Panel>
          <Panel $bg="#eadbbe" $w={278} $pad={89}>잔량전부</Panel>
          <StatusEnd>
            <svg width="14" height="18" viewBox="0 0 14 18"><path d="M2 0h10v2h-1v6l3 3v1H8v6H6v-6H0v-1l3-3V2H2z" fill="#666" /></svg>
            <Gear s={18} />
          </StatusEnd>
        </Status>
      </Page>
    </>
  );
}
